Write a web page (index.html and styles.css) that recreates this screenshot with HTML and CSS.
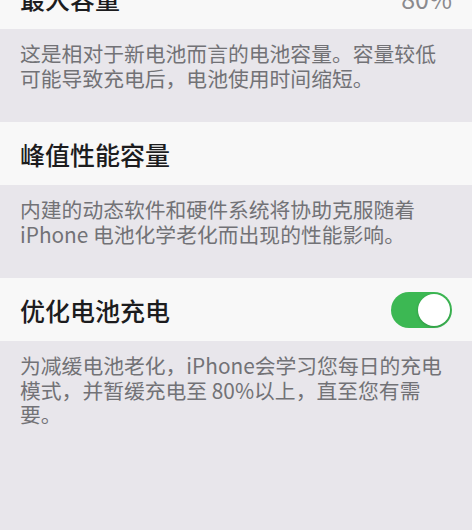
FILE: index.html
```html
<!DOCTYPE html>
<html lang="zh-CN">
<head>
    <meta charset="utf-8">
    <title>电池健康</title>
    <link rel="stylesheet" href="styles.css">
</head>
<body>
    <div class="liste">
        <div class="ligne ligne_haut">
            <span class="titre">最大容量</span>
            <span class="valeur">80%</span>
        </div>
        <p class="note">这是相对于新电池而言的电池容量。容量较低可能导致充电后，电池使用时间缩短。</p>

        <div class="ligne">
            <span class="titre">峰值性能容量</span>
        </div>
        <p class="note">内建的动态软件和硬件系统将协助克服随着 iPhone 电池化学老化而出现的性能影响。</p>

        <div class="ligne">
            <span class="titre">优化电池充电</span>
            <span class="interrupteur actif"><span class="bouton_rond"></span></span>
        </div>
        <p class="note">为减缓电池老化，iPhone会学习您每日的充电模式，并暂缓充电至 80%以上，直至您有需要。</p>
    </div>
</body>
</html>
```

FILE: styles.css
```css
body {
    margin: 0;
    background-color: #e8e6eb;
    font-family: "Noto Sans CJK SC", "Noto Sans", sans-serif;
    overflow: hidden;
}
.liste {
    display: flex;
    flex-direction: column;
}
.ligne {
    height: 63px;
    background-color: #f8f8f8;
    display: flex;
    align-items: center;
    justify-content: space-between;
    padding: 0 20px;
}
.ligne_haut {
    margin-top: -34px;
}
.titre {
    font-size: 25px;
    font-weight: 500;
    color: #1c1c1e;
}
.valeur {
    font-size: 25px;
    color: #8a8a8e;
}
.note {
    margin: 0;
    padding: 12px 30px 32px 20px;
    font-size: 20.8px;
    line-height: 24.5px;
    color: #727276;
}
.interrupteur {
    width: 61px;
    height: 36px;
    border-radius: 18px;
    background-color: #d9d9dc;
    display: flex;
    align-items: center;
    padding: 2px;
    box-sizing: border-box;
}
.interrupteur.actif {
    background-color: #3cb853;
    justify-content: flex-end;
}
.bouton_rond {
    width: 32px;
    height: 32px;
    border-radius: 50%;
    background-color: #ffffff;
    box-shadow: 0 1px 3px rgba(0, 0, 0, 0.2);
}
```
